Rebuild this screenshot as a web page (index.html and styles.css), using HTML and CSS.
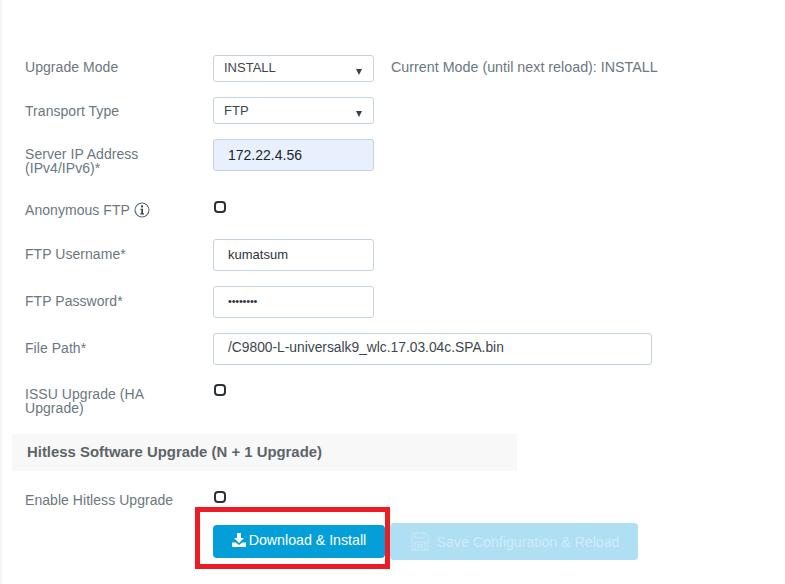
FILE: index.html
```html
<!DOCTYPE html>
<html lang="en">
<head>
<meta charset="utf-8">
<title>Upgrade</title>
<link rel="stylesheet" href="styles.css">
</head>
<body>
<form class="form">
  <div class="row row-select">
    <div class="label label-raised">Upgrade Mode</div>
    <div class="field field-select field-raised">INSTALL<span class="caret"></span></div>
    <div class="note">Current Mode (until next reload): INSTALL</div>
  </div>
  <div class="row row-select">
    <div class="label">Transport Type</div>
    <div class="field field-select">FTP<span class="caret"></span></div>
  </div>
  <div class="row row-input">
    <div class="label label-tight label-server">Server IP Address<br>(IPv4/IPv6)*</div>
    <div class="field field-input field-filled">172.22.4.56</div>
  </div>
  <div class="row row-check-anon">
    <div class="label label-anon">Anonymous FTP
      <svg class="info" width="16" height="16" viewBox="0 0 16 16" aria-hidden="true"><circle cx="8" cy="8" r="7" fill="none" stroke="#5d6972" stroke-width="1.1"/><rect x="7" y="3.4" width="2" height="2" fill="#39434b"/><path d="M6.3 6.7h2.7v4.6h1v1.1H6.3v-1.1h1V7.8h-1z" fill="#39434b"/></svg>
    </div>
    <span class="check check-anon"></span>
  </div>
  <div class="row row-input">
    <div class="label label-raised">FTP Username*</div>
    <div class="field field-input field-nudged">kumatsum</div>
  </div>
  <div class="row row-input">
    <div class="label label-raised">FTP Password*</div>
    <div class="field field-input field-secret field-nudged">••••••••</div>
  </div>
  <div class="row row-input">
    <div class="label label-raised">File Path*</div>
    <div class="field field-input field-wide">/C9800-L-universalk9_wlc.17.03.04c.SPA.bin</div>
  </div>
  <div class="row row-check-issu">
    <div class="label label-tight label-issu">ISSU Upgrade (HA<br>Upgrade)</div>
    <span class="check check-issu"></span>
  </div>
  <div class="section">Hitless Software Upgrade (N + 1 Upgrade)</div>
  <div class="row row-check-hitless">
    <div class="label label-hitless">Enable Hitless Upgrade</div>
    <span class="check check-hitless"></span>
  </div>
  <div class="actions">
    <button type="button" class="btn btn-primary">
      <svg width="14" height="14" viewBox="0 0 14 14" aria-hidden="true"><path d="M5 0h4v5h3L7 10 2 5h3z" fill="#fff"/><path d="M0 9.5h3.6L7 12l3.4-2.5H14V14H0z" fill="#fff"/></svg>
      Download &amp; Install
    </button>
    <button type="button" class="btn btn-disabled">
      <svg width="18" height="19" viewBox="0 0 18 19" aria-hidden="true"><path d="M1 1h13l3 3v14H1z" fill="none" stroke="#c6e6f5" stroke-width="1.3"/><path d="M4 1v5h9V1M4 18v-8h10v8M6 12.5h6M6 15h6" fill="none" stroke="#c6e6f5" stroke-width="1.3"/></svg>
      Save Configuration &amp; Reload
    </button>
    <div class="highlight"></div>
  </div>
</form>
</body>
</html>
```
FILE: styles.css
```css
* { box-sizing: border-box; }
html, body { margin: 0; padding: 0; background: #fff; height: 584px; overflow: hidden; }
body { border-left: 2px solid #f3f5f7; font-family: "Liberation Sans", Arial, sans-serif; font-size: 14px; color: #6c7780; }
.form { display: flex; flex-direction: column; gap: 15px; padding: 55px 0 0 10px; }
.row { display: flex; align-items: flex-start; }
.row-select { height: 27px; align-items: center; }
.row-input { height: 32px; align-items: center; }
.row-check-anon { height: 38px; }
.row-check-issu { height: 39px; }
.row-check-hitless { height: 24px; }
.label { width: 201px; padding-left: 13px; flex: none; letter-spacing: .05px; }
.label-tight { line-height: 14px; }
.label-raised { padding-bottom: 3px; }
.label-server { padding-top: 11px; }
.label-anon { padding-top: 16px; display: flex; align-items: center; gap: 4px; line-height: 16px; }
.label-issu { padding-top: 7px; }
.label-hitless { padding-top: 6px; }
.field { width: 161px; flex: none; border: 1px solid #c5d3de; border-radius: 3px; background: #fff; color: #3d464d; display: flex; align-items: center; height: 100%; }
.field-select { padding-left: 10px; position: relative; font-size: 13px; }
.field-raised { padding-bottom: 2px; }
.field-input { padding-left: 14px; font-size: 13px; color: #2c343a; }
.field-nudged { padding-bottom: 2px; }
.field-filled { background: #e8f0fd; color: #1d2429; font-size: 14px; }
.field-secret { font-size: 11px; letter-spacing: -.2px; }
.field-wide { width: 439px; color: #3d464d; font-size: 13.8px; padding-bottom: 4px; }
.caret { position: absolute; right: 11px; top: 13px; width: 0; height: 0; border-left: 3.5px solid transparent; border-right: 3.5px solid transparent; border-top: 6px solid #3a4249; }
.note { margin-left: 17px; font-size: 14.3px; padding-bottom: 3px; }
.check { width: 12px; height: 12px; margin-left: 1px; border: 2px solid #2b3136; border-radius: 4px; flex: none; }
.check-anon { margin-top: 15px; }
.check-issu { margin-top: 4px; }
.check-hitless { margin-top: 5px; }
.section { width: 505px; height: 37px; padding: 0 0 2px 15px; background: #f8f8f8; color: #5c6469; font-size: 14.9px; font-weight: 700; display: flex; align-items: center; }
.actions { display: flex; gap: 5px; padding-left: 201px; position: relative; align-items: flex-start; }
.btn { border: 0; border-radius: 4px; font: inherit; font-size: 14.2px; display: flex; align-items: center; justify-content: center; gap: 3px; padding: 0; color: #fff; }
.btn-primary { width: 172px; height: 33px; padding-bottom: 3px; background: #049fd9; }
.btn-disabled { width: 248px; height: 37px; margin-top: -2px; background: #aedff3; color: #d0ecf8; gap: 8px; padding-left: 2px; }
.highlight { position: absolute; left: 183px; top: -18px; width: 195px; height: 62px; border: 5px solid #ec1c24; pointer-events: none; }
```
